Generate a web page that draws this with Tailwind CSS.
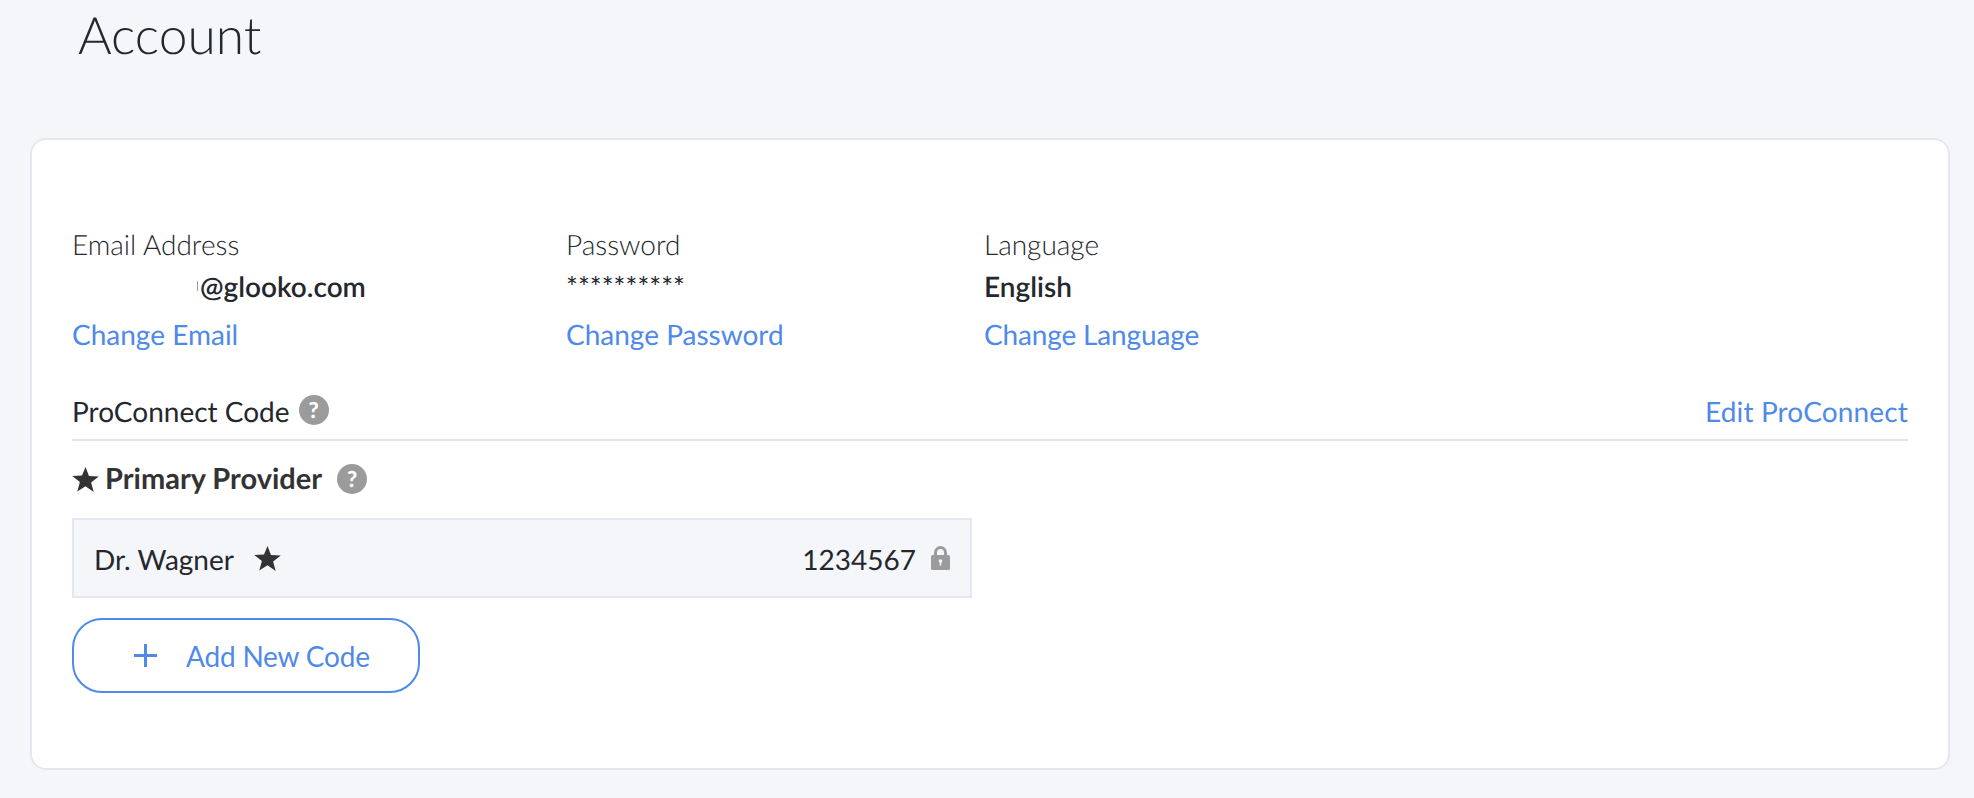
<!DOCTYPE html>
<html lang="en">
<head>
<meta charset="utf-8">
<title>Account</title>
<script src="https://cdn.jsdelivr.net/npm/@tailwindcss/browser@4"></script>
</head>
<body class="m-0 h-[798px] overflow-hidden bg-[#f4f6fa] font-['Lato','Liberation_Sans',sans-serif] text-[28px] text-[#24282d] [text-rendering:geometricPrecision]">
  <h1 class="ml-[78px] h-[138px] pt-[4px] text-[51.5px] leading-[60px] font-light">Account</h1>
  <section class="ml-[30px] h-[632px] w-[1920px] rounded-[16px] border-2 border-[#e4e7ef] bg-white pt-[86px] pr-[40px] pl-[40px]">
    <div class="flex">
      <div class="w-[494px]">
        <div class="h-[36px] leading-[36px] font-light">Email Address</div>
        <div class="mt-[6px] flex h-[36px] items-center pl-[125px] leading-[36px] font-semibold"><span class="mr-[2px] h-[10px] w-[1px] shrink-0 bg-[#9aa0a6]"></span><span>@glooko.com</span></div>
        <a class="mt-[12px] block h-[36px] leading-[36px] text-[#4f8ae8]">Change Email</a>
      </div>
      <div class="w-[418px]">
        <div class="h-[36px] leading-[36px] font-light">Password</div>
        <div class="mt-[6px] h-[36px] leading-[36px]">**********</div>
        <a class="mt-[12px] block h-[36px] leading-[36px] text-[#4f8ae8]">Change Password</a>
      </div>
      <div>
        <div class="h-[36px] leading-[36px] font-light">Language</div>
        <div class="mt-[6px] h-[36px] leading-[36px] font-semibold">English</div>
        <a class="mt-[12px] block h-[36px] leading-[36px] tracking-[-0.15px] text-[#4f8ae8]">Change Language</a>
      </div>
    </div>
    <div class="mt-[41px] flex h-[48px] items-start justify-between border-b-2 border-[#e2e5ea]">
      <div class="flex items-center">
        <span class="h-[36px] leading-[36px]">ProConnect Code</span>
        <span class="mt-[-2px] ml-[9px] flex size-[30px] items-center justify-center rounded-full bg-[#9b9b9b] text-[22px] leading-none font-black text-white">?</span>
      </div>
      <a class="h-[36px] leading-[36px] tracking-[0.15px] text-[#4f8ae8]">Edit ProConnect</a>
    </div>
    <div class="mt-[22px] flex h-[32px] items-center">
      <svg class="size-[27px]" viewBox="0 0 24 24" fill="#333"><path d="M12 .8l3.1 8.1 8.7.4-6.8 5.4 2.3 8.4L12 17.9l-7.3 4.8L7 14.3.2 8.9l8.7-.4z"/></svg>
      <span class="ml-[6px] text-[29px] font-bold text-[#333]">Primary Provider</span>
      <span class="ml-[15px] flex size-[30px] items-center justify-center rounded-full bg-[#9b9b9b] text-[22px] leading-none font-black text-white">?</span>
    </div>
    <div class="mt-[23px] flex h-[80px] w-[900px] items-center justify-between border-2 border-[#e4e7ef] bg-[#f4f6fa] pr-[20px] pl-[20px]">
      <div class="flex items-center">
        <span class="mt-[2px]">Dr. Wagner</span>
        <svg class="ml-[20px] size-[27px]" viewBox="0 0 24 24" fill="#333"><path d="M12 .8l3.1 8.1 8.7.4-6.8 5.4 2.3 8.4L12 17.9l-7.3 4.8L7 14.3.2 8.9l8.7-.4z"/></svg>
      </div>
      <div class="flex items-center">
        <span class="mt-[2px]">1234567</span>
        <svg class="ml-[15px] h-[24px] w-[19px]" viewBox="0 0 19 24"><path d="M4.5 10V6.5a5 5 0 0 1 10 0V10" fill="none" stroke="#9b9b9b" stroke-width="3"/><rect y="9" width="19" height="15" rx="1.5" fill="#9b9b9b"/><circle cx="9.5" cy="15" r="1.8" fill="#f4f6fa"/><rect x="8.7" y="15" width="1.6" height="4.5" fill="#f4f6fa"/></svg>
      </div>
    </div>
    <button class="mt-[20px] flex h-[75px] w-[348px] items-center rounded-[30px] border-2 border-[#4f8ae8] bg-white pl-[60px] text-[#4f8ae8]">
      <svg class="size-[23px]" viewBox="0 0 23 23" fill="none" stroke="#4f8ae8" stroke-width="3"><path d="M11.5 0v23M0 11.5h23"/></svg>
      <span class="ml-[29px] tracking-[-0.2px]">Add New Code</span>
    </button>
  </section>
</body>
</html>
